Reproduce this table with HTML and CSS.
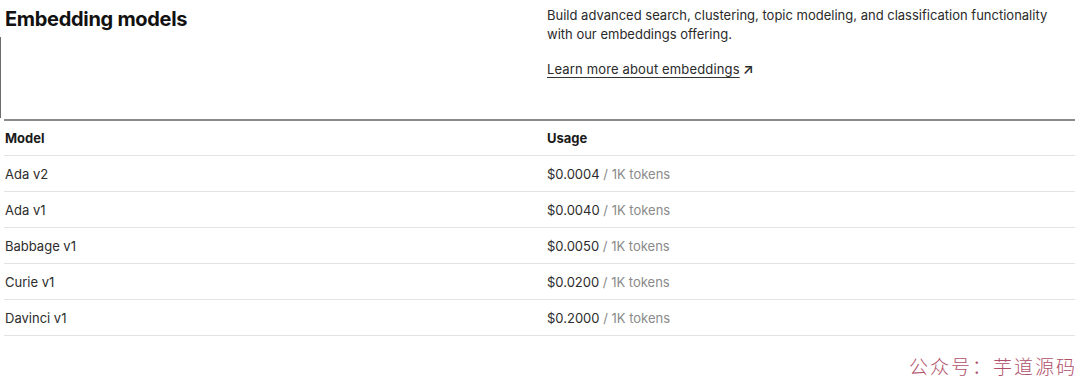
FILE: index.html
```html
<!DOCTYPE html>
<html>
<head>
<meta charset="utf-8">
<link rel="stylesheet" href="styles.css">
</head>
<body>
<div class="page">
  <section class="intro">
    <div class="intro-left">
      <h2 class="title">Embedding models</h2>
      <div class="side-rule"></div>
    </div>
    <div class="intro-right">
      <p class="desc">Build advanced search, clustering, topic modeling, and classification functionality with our embeddings offering.</p>
      <a class="learn">Learn more about embeddings</a><span class="arrow">↗</span>
    </div>
  </section>
  <div class="table">
    <div class="row head"><div class="c1">Model</div><div class="c2">Usage</div></div>
    <div class="row"><div class="c1">Ada v2</div><div class="c2">$0.0004 <span class="unit">/ 1K tokens</span></div></div>
    <div class="row"><div class="c1">Ada v1</div><div class="c2">$0.0040 <span class="unit">/ 1K tokens</span></div></div>
    <div class="row"><div class="c1">Babbage v1</div><div class="c2">$0.0050 <span class="unit">/ 1K tokens</span></div></div>
    <div class="row"><div class="c1">Curie v1</div><div class="c2">$0.0200 <span class="unit">/ 1K tokens</span></div></div>
    <div class="row"><div class="c1">Davinci v1</div><div class="c2">$0.2000 <span class="unit">/ 1K tokens</span></div></div>
  </div>
  <div class="footer">
    <span class="watermark">公众号：芋道源码</span>
  </div>
</div>
</body>
</html>
```
FILE: styles.css
```css
html, body {
  margin: 0;
  padding: 0;
  background: #ffffff;
}
body {
  font-family: Inter, "Liberation Sans", sans-serif;
  color: #202123;
  width: 1080px;
  height: 386px;
  overflow: hidden;
}
.page {
  padding: 0 5px 0 0;
}
.intro {
  display: grid;
  grid-template-columns: 547px 1fr;
  height: 121px;
  border-bottom: 2px solid #8a8a8a;
  margin-left: 4px;
  box-sizing: border-box;
}
.intro-left {
  display: flex;
  flex-direction: column;
  margin-left: -4px;
}
.title {
  margin: 7px 0 0 5px;
  font-size: 20px;
  font-weight: 700;
  line-height: 24px;
  letter-spacing: -0.3px;
  color: #111;
}
.side-rule {
  width: 1px;
  height: 81px;
  margin-top: 6px;
  background: #6b6b6b;
}
.intro-right {
  padding-top: 6px;
  font-size: 13px;
  line-height: 19px;
  color: #2a2a2a;
  margin-left: -4px;
}
.desc {
  margin: 0 0 15px 0;
  width: 520px;
}
.learn {
  text-decoration: underline;
  text-decoration-color: #333;
  text-underline-offset: 3px;
  color: #2a2a2a;
  letter-spacing: 0.15px;
}
.arrow {
  margin-left: 3px;
  font-size: 14px;
  font-weight: 600;
}
.table {
  margin-left: 4px;
}
.row {
  display: grid;
  grid-template-columns: 543px 1fr;
  height: 35px;
  align-items: center;
  border-bottom: 1px solid #e3e3e3;
  font-size: 13px;
  color: #2c2c2c;
}
.row .c1 { padding-left: 1px; }
.row .c2 { padding-left: 0; }
.row.head {
  height: 34px;
  font-weight: 700;
  color: #1a1a1a;
}
.unit {
  color: #8a8a8a;
}
.footer {
  display: flex;
  justify-content: flex-end;
  padding: 16px 0 0 0;
}
.watermark {
  font-family: "Noto Sans CJK SC", sans-serif;
  font-size: 19px;
  color: #b0506a;
  letter-spacing: 2px;
  font-weight: 300;
  margin-right: -2px;
}
```
